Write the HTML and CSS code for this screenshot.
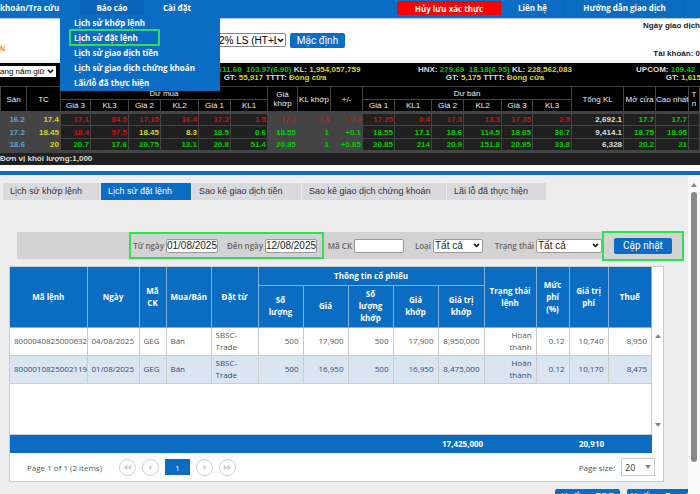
FILE: index.html
```html
<!DOCTYPE html>
<html lang="vi">
<head>
  <meta charset="UTF-8">
  <meta name="viewport" content="width=device-width, initial-scale=1.0">
  <title>Lịch sử đặt lệnh</title>
  <link rel="stylesheet" href="styles.css">
</head>
<body>
  <nav class="nav">
    <a class="nav-first" href="#">khoán/Tra cứu</a>
    <div class="nav-drop">
      <a class="open" href="#">Báo cáo</a>
      <div class="menu">
        <a href="#">Lịch sử khớp lệnh</a>
        <a class="marked" href="#">Lịch sử đặt lệnh</a>
        <a href="#">Lịch sử giao dịch tiền</a>
        <a href="#">Lịch sử giao dịch chứng khoán</a>
        <a href="#">Lãi/lỗ đã thực hiện</a>
      </div>
    </div>
    <a class="nav-setting" href="#">Cài đặt</a>
    <div class="nav-right">
      <button class="cancel" type="button">Hủy lưu xác thực</button>
      <a class="nav-contact" href="#">Liên hệ</a>
      <a class="nav-guide" href="#">Hướng dẫn giao dịch</a>
      <span class="nav-end"></span>
    </div>
  </nav>

  <header class="top">
    <span class="brand">N</span>
    <div class="top-form">
      <select class="rate" aria-label="Lãi suất"><option>2% LS (HT+L</option></select>
      <button class="btn" type="button">Mặc định</button>
    </div>
    <div class="account">
      <div>Ngày giao dịch</div>
      <div>Tài khoản: 0</div>
    </div>
  </header>

  <section class="market">
    <div class="market-list">
      <select class="holding" aria-label="Danh mục"><option>ang nắm giữ</option></select>
    </div>
    <div class="index">
      <div><b class="up">611.60 &nbsp;103.97(6.90)</b> KL: <b class="ref">1,954,057,759</b></div>
      <div>GT: <b class="ref">55,917</b> TTTT: <b class="ref">Đóng cửa</b></div>
    </div>
    <div class="index">
      <div>HNX: <b class="up">279.69 &nbsp;18.18(6.95)</b> KL: <b class="ref">228,562,083</b></div>
      <div>GT: <b class="ref">5,175</b> TTTT: <b class="ref">Đóng cửa</b></div>
    </div>
    <div class="index">
      <div>UPCOM: <b class="up">109.42 &nbsp;4.21(0.39)</b> KL: <b class="ref">86,120,450</b></div>
      <div>GT: <b class="ref">1,615</b> TTTT: <b class="ref">Đóng cửa</b></div>
    </div>
  </section>

  <table class="board">
    <colgroup>
      <col class="w26"><col class="w34">
      <col class="w30"><col class="w38"><col class="w32"><col class="w38"><col class="w32"><col class="w37">
      <col class="w30"><col class="w33"><col class="w32">
      <col class="w32"><col class="w37"><col class="w32"><col class="w38"><col class="w31"><col class="w39">
      <col class="w52"><col class="w32"><col class="w33"><col>
    </colgroup>
    <thead>
      <tr>
        <th rowspan="2">Sàn</th><th rowspan="2">TC</th>
        <th colspan="6">Dư mua</th>
        <th rowspan="2">Giá<br>khớp</th><th rowspan="2">KL khớp</th><th rowspan="2">+/-</th>
        <th colspan="6">Dư bán</th>
        <th rowspan="2">Tổng KL</th><th rowspan="2">Mở cửa</th><th rowspan="2">Cao nhất</th><th rowspan="2">T<br>n</th>
      </tr>
      <tr>
        <th>Giá 3</th><th>KL3</th><th>Giá 2</th><th>KL2</th><th>Giá 1</th><th>KL1</th>
        <th>Giá 1</th><th>KL1</th><th>Giá 2</th><th>KL2</th><th>Giá 3</th><th>KL3</th>
      </tr>
    </thead>
    <tbody>
      <tr class="down">
        <td class="floor">16.2</td><td class="tc">17.4</td>
        <td>17.1</td><td>84.5</td><td>17.15</td><td>16.4</td><td>17.2</td><td>1.5</td>
        <td class="match">17.2</td><td class="match">9.6</td><td class="match">-0.2</td>
        <td>17.25</td><td>0.4</td><td>17.3</td><td>13.3</td><td>17.35</td><td>2.5</td>
        <td class="total">2,692.1</td><td class="up">17.7</td><td class="up">17.7</td><td></td>
      </tr>
      <tr class="up">
        <td class="floor">17.2</td><td class="tc">18.45</td>
        <td class="down">18.4</td><td class="down">57.5</td><td class="ref">18.45</td><td class="ref">8.3</td><td>18.5</td><td>0.6</td>
        <td class="match">18.55</td><td class="match">1</td><td class="match">+0.1</td>
        <td>18.55</td><td>17.1</td><td>18.6</td><td>114.5</td><td>18.65</td><td>36.7</td>
        <td class="total">9,414.1</td><td>18.75</td><td>18.95</td><td></td>
      </tr>
      <tr class="up">
        <td class="floor">18.6</td><td class="tc">20</td>
        <td>20.7</td><td>17.6</td><td>20.75</td><td>13.1</td><td>20.8</td><td>51.4</td>
        <td class="match">20.85</td><td class="match">1</td><td class="match">+0.85</td>
        <td>20.85</td><td>214</td><td>20.9</td><td>151.8</td><td>20.95</td><td>33.8</td>
        <td class="total">6,328</td><td>20.2</td><td>21</td><td></td>
      </tr>
    </tbody>
  </table>
  <div class="unit">Đơn vị khối lượng:1,000</div>

  <div class="lower">
    <main class="content">
      <div class="tabs">
        <a class="tab1" href="#">Lịch sử khớp lệnh</a>
        <a class="tab2 active" href="#">Lịch sử đặt lệnh</a>
        <a class="tab3" href="#">Sao kê giao dịch tiền</a>
        <a class="tab4" href="#">Sao kê giao dịch chứng khoán</a>
        <a class="tab5" href="#">Lãi lỗ đã thực hiện</a>
      </div>

      <form class="filter">
        <div class="dates">
          <label for="from">Từ ngày</label><input type="text" id="from" value="01/08/2025">
          <label class="to" for="to">Đến ngày</label><input type="text" id="to" value="12/08/2025">
        </div>
        <div class="field"><label for="code">Mã CK</label><input type="text" id="code"></div>
        <div class="field kind"><label for="kind">Loại</label><select id="kind"><option>Tất cả</option></select></div>
        <div class="field status"><label for="status">Trạng thái</label><select id="status"><option>Tất cả</option></select></div>
        <div class="submit"><button class="btn" type="button">Cập nhật</button></div>
      </form>

      <div class="grid">
        <div class="grid-main">
          <table class="orders">
            <colgroup>
              <col class="w77"><col class="w52"><col class="w27"><col class="w45"><col class="w47">
              <col class="w45"><col class="w45"><col class="w45"><col class="w45"><col class="w46">
              <col class="w52"><col class="w33"><col class="w39"><col>
            </colgroup>
            <thead>
              <tr class="head1">
                <th rowspan="2">Mã lệnh</th><th rowspan="2">Ngày</th><th rowspan="2">Mã CK</th>
                <th rowspan="2">Mua/Bán</th><th rowspan="2">Đặt từ</th>
                <th colspan="5">Thông tin cổ phiếu</th>
                <th rowspan="2">Trạng thái lệnh</th><th rowspan="2">Mức phí (%)</th>
                <th rowspan="2">Giá trị phí</th><th rowspan="2">Thuế</th>
              </tr>
              <tr class="head2">
                <th>Số lượng</th><th>Giá</th><th>Số lượng khớp</th><th>Giá khớp</th><th>Giá trị khớp</th>
              </tr>
            </thead>
            <tbody>
              <tr>
                <td>8000040825000632</td><td>04/08/2025</td><td>GEG</td><td>Bán</td><td>SBSC-<br>Trade</td>
                <td class="num">500</td><td class="num">17,900</td><td class="num">500</td><td class="num">17,900</td>
                <td class="num">8,950,000</td><td class="num">Hoàn thành</td><td class="num">0.12</td><td class="num">10,740</td><td class="num">8,950</td>
              </tr>
              <tr class="alt">
                <td>8000010825002119</td><td>01/08/2025</td><td>GEG</td><td>Bán</td><td>SBSC-<br>Trade</td>
                <td class="num">500</td><td class="num">16,950</td><td class="num">500</td><td class="num">16,950</td>
                <td class="num">8,475,000</td><td class="num">Hoàn thành</td><td class="num">0.12</td><td class="num">10,170</td><td class="num">8,475</td>
              </tr>
              <tr class="blank"><td colspan="14"></td></tr>
            </tbody>
            <tfoot>
              <tr>
                <td colspan="9"></td><td>17,425,000</td><td colspan="2"></td><td class="num">20,910</td><td></td>
              </tr>
            </tfoot>
          </table>
          <div class="grid-scroll">
            <span class="arrow-up"></span>
            <span class="arrow-down"></span>
          </div>
        </div>
        <div class="pager">
          <span class="pages">Page 1 of 1 (2 items)</span>
          <button type="button" aria-label="First page"><svg viewBox="0 0 16 16"><path d="M8 5v6L4 8zM12 5v6L8 8z"/></svg></button>
          <button type="button" aria-label="Previous page"><svg viewBox="0 0 16 16"><path d="M9 5v6L6 8z"/></svg></button>
          <button class="current" type="button">1</button>
          <button type="button" aria-label="Next page"><svg viewBox="0 0 16 16"><path d="M7 5v6l3-3z"/></svg></button>
          <button type="button" aria-label="Last page"><svg viewBox="0 0 16 16"><path d="M4 5v6l4-3zM8 5v6l4-3z"/></svg></button>
          <label class="size-label" for="size">Page size:</label>
          <div class="size">
            <select id="size"><option>20</option></select>
            <span class="arrow-down"></span>
          </div>
        </div>
      </div>

      <div class="exports">
        <button class="btn" type="button">Xuất ra PDF</button>
        <button class="btn" type="button">Xuất ra Excel</button>
      </div>
    </main>
    <div class="scrollbar">
      <span class="arrow-up"></span>
      <div class="thumb"></div>
    </div>
  </div>
</body>
</html>
```

FILE: styles.css
```css
* {
  box-sizing: border-box;
}
body {
  display: flex;
  flex-direction: column;
  height: 100vh;
  margin: 0;
  overflow: hidden;
  background: #fff;
  font-family: "Liberation Sans", Arial, sans-serif;
  font-size: 8px;
}
a {
  color: inherit;
  text-decoration: none;
  white-space: nowrap;
}
button, input, select {
  margin: 0;
  font-family: inherit;
}
select {
  appearance: none;
  background: #fff url("data:image/svg+xml,%3Csvg xmlns='http://www.w3.org/2000/svg' viewBox='0 0 8 6'%3E%3Cpath d='M1 1l3 3 3-3' fill='none' stroke='%23222' stroke-width='2'/%3E%3C/svg%3E") no-repeat right 2px center / 7px 5px;
}
table {
  width: 100%;
  table-layout: fixed;
  border-collapse: collapse;
}
.btn {
  padding: 0;
  border: 0;
  border-radius: 2px;
  background: #0b6cc4;
  color: #fff;
  font-family: Roboto, sans-serif;
  font-size: 10px;
}

/* column widths */
.w26 { width: 26px; }
.w27 { width: 27px; }
.w30 { width: 30px; }
.w31 { width: 31px; }
.w32 { width: 32px; }
.w33 { width: 33px; }
.w34 { width: 34px; }
.w37 { width: 37px; }
.w38 { width: 38px; }
.w39 { width: 39px; }
.w45 { width: 45px; }
.w46 { width: 46px; }
.w47 { width: 47px; }
.w52 { width: 52px; }
.w77 { width: 77px; }

/* menu bar */
.nav {
  display: flex;
  flex: none;
  height: 19px;
  border-bottom: 1px solid #a9cbe8;
  background: #0b6cc4;
  color: #fff;
  font-family: "Open Sans", sans-serif;
  font-size: 8px;
  font-weight: bold;
  line-height: 15px;
}
.nav-first {
  width: 80px;
}
.nav-drop {
  position: relative;
  width: 64px;
}
.nav-drop .open {
  display: block;
  height: 18px;
  background: #0a64b8;
  text-align: center;
}
.menu {
  position: absolute;
  z-index: 2;
  top: 15px;
  left: -20px;
  width: 160px;
  padding: 0 0 1px 10px;
  background: #0b6cc4;
}
.menu a {
  display: block;
  padding-left: 4px;
}
.menu .marked {
  width: 89px;
  outline: 2px solid #2ee052;
  outline-offset: -1px;
}
.nav-setting {
  padding-left: 19px;
}
.nav-right {
  display: flex;
  margin-left: auto;
}
.cancel {
  width: 104px;
  height: 14px;
  margin-top: 1px;
  padding: 0;
  border: 0;
  background: #f00;
  color: #fff;
  font-size: 8px;
  font-weight: bold;
}
.nav-contact, .nav-guide {
  border-right: 1px solid #0a62b4;
  text-align: center;
}
.nav-contact {
  width: 64px;
}
.nav-guide {
  width: 120px;
}
.nav-end {
  width: 15px;
}

/* header */
.top {
  display: flex;
  flex: none;
  height: 44px;
  border-bottom: 3px solid #f2f2f2;
}
.brand {
  width: 200px;
  padding-top: 26px;
  color: #f58220;
  font-size: 7px;
  font-weight: bold;
}
.top-form {
  display: flex;
  gap: 4px;
  align-items: center;
  padding-top: 1px;
}
.rate {
  width: 86px;
  height: 14px;
  padding: 0 8px 0 18px;
  border: 1px solid #888;
  border-radius: 2px;
  background-position: right 1px center;
  font-size: 10px;
}
.top-form .btn {
  width: 55px;
  height: 15px;
}
.account {
  display: flex;
  flex-direction: column;
  justify-content: space-between;
  margin-left: auto;
  padding: 2px 0 1px;
  color: #222;
  font-size: 8px;
  font-weight: bold;
  line-height: 10px;
  text-align: right;
}

/* market indexes */
.market {
  display: flex;
  flex: none;
  height: 23px;
  padding-top: 3px;
  overflow: hidden;
  background: #000;
  color: #ddd;
  font-size: 8px;
  font-weight: bold;
  line-height: 8px;
}
.market-list {
  flex: 0 0 165px;
}
.holding {
  display: block;
  width: 56px;
  height: 11px;
  padding: 0;
  border: 0;
  font-size: 8px;
}
.index {
  flex: 0 0 220px;
  text-align: center;
  white-space: nowrap;
}
.index:nth-child(2) div:first-child {
  padding-left: 28px;
}
.up { color: #0c0; }
.down { color: #d01010; }
.ref { color: #d8d820; }

/* price board */
.board {
  flex: none;
  background: #202020;
  font-size: 8px;
  font-weight: bold;
  line-height: 9px;
}
.board th, .board td {
  padding: 0 1px;
  border: 1px solid #444;
}
.board th {
  height: 13px;
  padding: 0;
  background: #000;
  color: #eee;
  font-weight: normal;
  white-space: nowrap;
}
.board thead {
  border-bottom: 3px solid #444;
}
.board td {
  height: 13px;
  text-align: right;
}
.board tbody {
  border-bottom: 3px solid #444;
}
.board .floor {
  background: #444;
  color: #5aa6d8;
}
.board .tc {
  background: #444;
  color: #d8d820;
}
.board .match {
  background: #444;
}
.board .total {
  color: #ddd;
}
.unit {
  flex: none;
  height: 12px;
  margin-bottom: 6px;
  background: #202020;
  color: #ddd;
  font-weight: bold;
  line-height: 12px;
}

/* lower panel */
.lower {
  display: flex;
  flex: 1;
  min-height: 0;
  border-top: 4px solid #0b6cc4;
  background: #ededed;
}
.content {
  flex: 1;
  min-width: 0;
  padding-top: 8px;
  overflow: hidden;
}
.scrollbar {
  display: flex;
  flex-direction: column;
  align-items: center;
  width: 12px;
  padding-top: 8px;
  background: #fafafa;
}
.thumb {
  width: 6px;
  height: 270px;
  margin-top: 5px;
  border-radius: 3px;
  background: #8a8a8a;
}
.arrow-up, .arrow-down {
  width: 0;
  height: 0;
  border-right: 3px solid transparent;
  border-left: 3px solid transparent;
}
.arrow-up {
  border-bottom: 4px solid #888;
}
.arrow-down {
  border-top: 4px solid #888;
}

.tabs {
  display: flex;
  gap: 1px;
  margin-left: 3px;
  color: #333;
  font-size: 9px;
  line-height: 17px;
}
.tabs a {
  padding-left: 7px;
  background: #d9d9e0;
}
.tabs .active {
  background: #0b6cc4;
  color: #fff;
}
.tab1 { width: 97px; }
.tab2 { width: 90px; }
.tab3 { width: 109px; }
.tab4 { width: 144px; }
.tab5 { width: 99px; }

.filter {
  display: flex;
  align-items: center;
  justify-content: flex-end;
  height: 27px;
  margin: 32px 4px 7px 17px;
  border-radius: 2px;
  background: #d3d3d3;
  color: #666;
  font-family: "Open Sans", sans-serif;
  font-size: 8px;
  font-weight: 600;
  white-space: nowrap;
}
.filter input, .filter select {
  width: 50px;
  height: 14px;
  padding: 0 1px;
  border: 1px solid #999;
  border-radius: 2px;
  background-color: #fff;
  color: #222;
  font-family: "Liberation Sans", sans-serif;
  font-size: 10px;
}
.filter select {
  padding: 0 10px 0 1px;
}
.dates, .field {
  display: flex;
  gap: 2px;
  align-items: center;
  justify-content: flex-end;
}
.dates {
  width: 195px;
  height: 27px;
  padding-right: 5px;
  border: 2px solid #2ee052;
}
.dates input {
  width: 52px;
  padding: 0;
}
.dates .to {
  margin-left: 7px;
}
.field {
  width: 80px;
}
.kind {
  width: 79px;
}
.filter .status {
  width: 119px;
}
.filter .status select {
  width: 66px;
}
.submit {
  display: flex;
  align-items: center;
  justify-content: center;
  width: 82px;
  height: 30px;
  border: 2px solid #2ee052;
}
.submit .btn {
  width: 58px;
  height: 16px;
}

/* order grid */
.grid {
  margin: 0 24px 0 9px;
  border: 1px solid #ccc;
  background: #fff;
  color: #555;
  font-family: "Open Sans", sans-serif;
  font-size: 8px;
}
.grid-main {
  display: flex;
}
.orders {
  flex: 1;
  min-width: 0;
  line-height: 12px;
}
.orders th {
  padding: 0 4px;
  border: 1px solid #7fb0de;
  border-top: 0;
  background: #0b6cc4;
  color: #fff;
}
.head1 {
  height: 18px;
}
.head2 {
  height: 42px;
}
.orders .head2 th {
  padding: 0 7px;
}
.orders td {
  height: 28px;
  padding: 0 4px;
  border: 1px solid #ccc;
  overflow: hidden;
}
.orders th:first-child, .orders td:first-child {
  border-left: 0;
}
.orders .head2 th:first-child {
  border-left: 1px solid #7fb0de;
}
.orders .num {
  text-align: right;
}
.orders .alt {
  background: #dbe4f1;
  color: #2c4d80;
}
.orders .blank td {
  height: 51px;
}
.orders tfoot td {
  height: 19px;
  border: 0;
  background: #0b6cc4;
  color: #fff;
  font-weight: bold;
}
.grid-scroll {
  display: flex;
  flex-direction: column;
  align-items: center;
  justify-content: space-between;
  width: 11px;
  padding: 67px 0 26px;
}
.pager {
  display: flex;
  gap: 6px;
  align-items: center;
  height: 28px;
  padding: 0 8px 0 17px;
}
.pages {
  width: 86px;
}
.pager button {
  width: 17px;
  height: 17px;
  padding: 0;
  border: 1px solid #ccc;
  border-radius: 50%;
  background: #fff;
}
.pager svg {
  display: block;
  fill: #ccc;
}
.pager .current {
  width: 25px;
  height: 16px;
  border: 0;
  border-radius: 0;
  background: #0b6cc4;
  color: #fff;
  font-size: 8px;
}
.size-label {
  margin-left: auto;
}
.size {
  display: flex;
  position: relative;
  align-items: center;
}
.size select {
  width: 34px;
  height: 18px;
  padding: 0 3px;
  border: 1px solid #ccc;
  background: #fff;
  color: #333;
  font-size: 9px;
}
.size .arrow-down {
  position: absolute;
  right: 4px;
}
.exports {
  display: flex;
  gap: 7px;
  justify-content: flex-end;
  margin: 7px -4px 0 0;
}
.exports .btn {
  width: 65px;
  height: 16px;
}
```
